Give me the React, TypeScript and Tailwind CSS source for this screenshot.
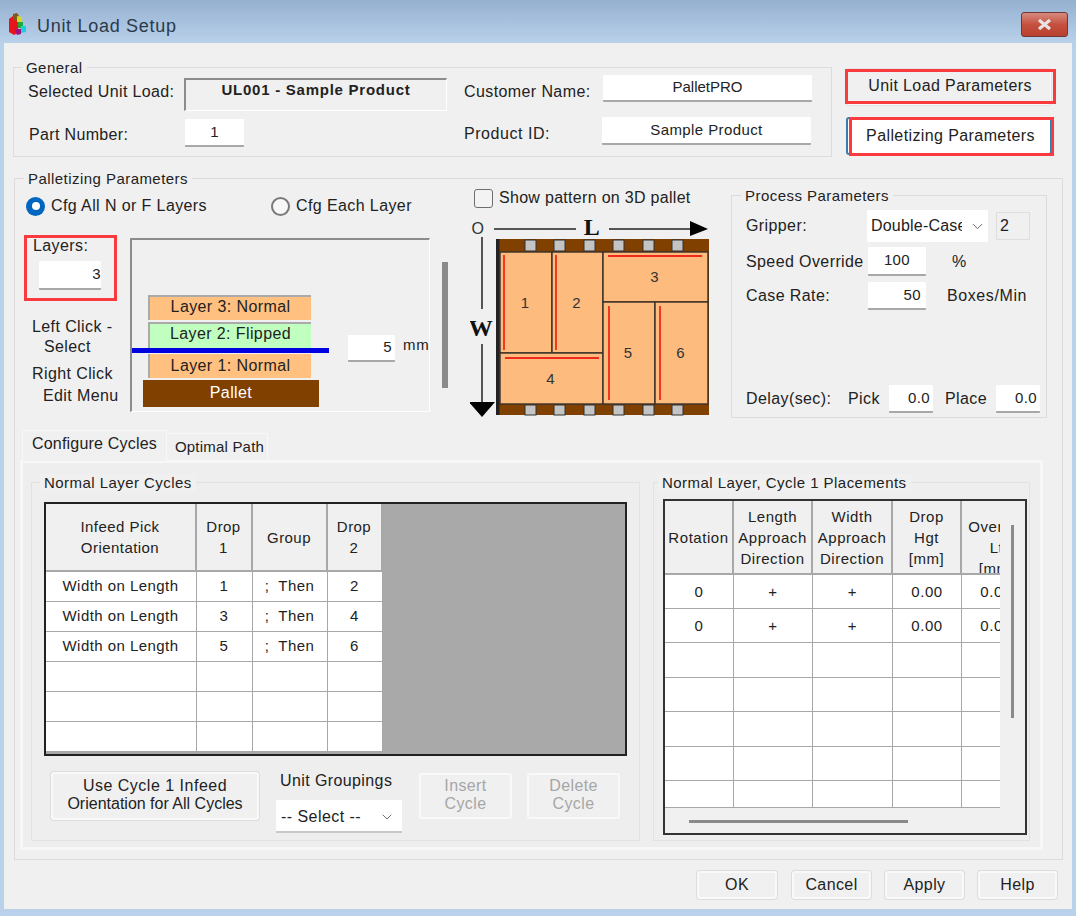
import { ReactNode } from 'react'
import { ChevronDown } from 'lucide-react'

function Group({ title, className, labelClass = 'ml-[9px]', children }: { title: string; className: string; labelClass?: string; children?: ReactNode }) {
  return (
    <div className={`border border-[#dcdcdc] ${className}`}>
      <div className={`-mt-[9px] h-[18px] w-fit bg-[#f0f0f0] px-[4px] text-[15px] leading-[18px] tracking-[0.45px] ${labelClass}`}>{title}</div>
      {children}
    </div>
  )
}

function Field({ className, children }: { className: string; children?: ReactNode }) {
  return (
    <div className={`flex shrink-0 items-center rounded-[1px] border-b-2 border-[#a8a8a8] bg-white text-[15px] ${className}`}>
      {children}
    </div>
  )
}

function Radio({ on }: { on?: boolean }) {
  if (on) {
    return (
      <span className="flex h-[19px] w-[19px] items-center justify-center rounded-full bg-[#0067c0]">
        <span className="h-[8px] w-[8px] rounded-full bg-white" />
      </span>
    )
  }
  return <span className="h-[19px] w-[19px] rounded-full border-2 border-[#7a7a7a] bg-[#f7f7f7]" />
}

function PalletDiagram() {
  const notches = [525, 554, 584, 613, 643, 672]
  const boxes = [
    { n: 1, x: 500, y: 252, w: 52, h: 101 },
    { n: 2, x: 552, y: 252, w: 51, h: 101 },
    { n: 3, x: 603, y: 252, w: 105, h: 50 },
    { n: 4, x: 500, y: 353, w: 103, h: 51 },
    { n: 5, x: 603, y: 302, w: 52, h: 102 },
    { n: 6, x: 655, y: 302, w: 53, h: 102 },
  ]
  const marks = [
    [504, 255, 504, 350],
    [556, 255, 556, 350],
    [608, 256, 702, 256],
    [505, 358, 599, 358],
    [609, 306, 609, 400],
    [660, 306, 660, 400],
  ]
  return (
    <svg width="245" height="203" viewBox="470 215 245 203" className="mt-[7px] block">
      <text x="478" y="234" textAnchor="middle" fontSize="16" fill="#333">O</text>
      <line x1="494" y1="229" x2="576" y2="229" stroke="#555" strokeWidth="2" />
      <text x="592" y="235" textAnchor="middle" fontSize="24" fontWeight="700" fill="#111" fontFamily="'Liberation Serif',serif">L</text>
      <line x1="609" y1="229" x2="692" y2="229" stroke="#555" strokeWidth="2" />
      <polygon points="690,221 708,229 690,236" fill="#000" />
      <line x1="482" y1="237" x2="482" y2="309" stroke="#555" strokeWidth="2" />
      <text x="481" y="336" textAnchor="middle" fontSize="24" fontWeight="700" fill="#111" fontFamily="'Liberation Serif',serif">W</text>
      <line x1="482" y1="344" x2="482" y2="404" stroke="#555" strokeWidth="2" />
      <polygon points="469,402 495,402 482,417" fill="#000" />
      <rect x="496" y="239" width="213" height="176" fill="#804000" />
      {notches.map((x) => (
        <g key={x}>
          <rect x={x} y="240" width="11" height="11" fill="#c4c4c4" stroke="#333" />
          <rect x={x} y="405" width="11" height="10" fill="#c4c4c4" stroke="#333" />
        </g>
      ))}
      <rect x="496" y="239" width="3.5" height="176" fill="#222" />
      {boxes.map((b) => (
        <g key={b.n}>
          <rect x={b.x} y={b.y} width={b.w} height={b.h} fill="#fdbb7e" stroke="#3a3028" strokeWidth="1.4" />
          <text x={b.x + b.w / 2 - 1} y={b.y + b.h / 2 + 5} textAnchor="middle" fontSize="15" fill="#333">{b.n}</text>
        </g>
      ))}
      {marks.map((m) => (
        <line key={m[0] + '-' + m[1]} x1={m[0]} y1={m[1]} x2={m[2]} y2={m[3]} stroke="#f02a1a" strokeWidth="1.8" />
      ))}
    </svg>
  )
}

const cycleRows = [
  ['Width on Length', '1', ';  Then', '2'],
  ['Width on Length', '3', ';  Then', '4'],
  ['Width on Length', '5', ';  Then', '6'],
  ['', '', '', ''],
  ['', '', '', ''],
  ['', '', '', ''],
]

function CyclesTable() {
  return (
    <div className="ml-[12px] mt-[10px] h-[254px] w-[583px] border-2 border-[#222] bg-[#a9a9a9]">
      <div className="grid w-fit grid-cols-[151px_56px_75px_55px] grid-rows-[68px_repeat(6,30px)] text-center text-[15px] leading-[21px] tracking-[0.45px]">
        {['Infeed Pick\nOrientation', 'Drop\n1', 'Group', 'Drop\n2'].map((h) => (
          <div key={h} className="flex items-center justify-center whitespace-pre-line border-b-2 border-r-2 border-[#a8a8a8] bg-[#f0f0f0] pr-[1px]">
            {h}
          </div>
        ))}
        {cycleRows.flatMap((row, r) =>
          row.map((c, i) => (
            <div key={r + '-' + i} className="flex items-center justify-center whitespace-pre border-b border-r border-[#a8a8a8] bg-white pb-[2px] pr-[1px]">
              {c}
            </div>
          )),
        )}
      </div>
    </div>
  )
}

const placementRows = [
  ['0', '+', '+', '0.00', '0.00'],
  ['0', '+', '+', '0.00', '0.00'],
  ['', '', '', '', ''],
  ['', '', '', '', ''],
  ['', '', '', '', ''],
  ['', '', '', '', ''],
  ['', '', '', '', ''],
]

function PlacementsTable() {
  return (
    <div className="relative ml-[9px] mt-[7px] h-[336px] w-[364px] border-2 border-[#333] bg-[#f0f0f0]">
      <div className="h-[308px] w-[335px] overflow-hidden">
        <div className="grid w-[366px] grid-cols-[69px_79px_80px_69px_69px] grid-rows-[74px_34px_34px_35px_34px_35px_34px_27px] text-center text-[15px] leading-[21px] tracking-[0.55px]">
          {['Rotation', 'Length\nApproach\nDirection', 'Width\nApproach\nDirection', 'Drop\nHgt\n[mm]'].map((h) => (
            <div key={h} className="flex items-center justify-center whitespace-pre-line border-b-2 border-r-2 border-[#a8a8a8] bg-[#f0f0f0]">
              {h}
            </div>
          ))}
          <div className="overflow-hidden whitespace-pre-line border-b-2 border-[#a8a8a8] bg-[#f0f0f0] pt-[15px]">{'Overlap\nLt\n[mm]'}</div>
          {placementRows.flatMap((row, r) =>
            row.map((c, i) => (
              <div key={r + '-' + i} className="flex items-center justify-center border-b border-r border-[#a8a8a8] bg-white">
                {c}
              </div>
            )),
          )}
        </div>
      </div>
      <div className="absolute left-[346px] top-[24px] h-[193px] w-[3px] bg-[#8a8a8a]" />
      <div className="absolute left-[24px] top-[319px] h-[3px] w-[219px] bg-[#8a8a8a]" />
    </div>
  )
}

function DialogButton({ className, children }: { className: string; children: ReactNode }) {
  return (
    <div className={`flex shrink-0 items-center justify-center rounded-[3px] border-2 border-[#f9f9f9] bg-[#f0f0f0] text-center leading-[18px] ${className}`}>
      {children}
    </div>
  )
}

export default function App() {
  return (
    <div className="flex h-[916px] w-[1076px] flex-col overflow-hidden bg-[#b9d1ea] font-['Liberation_Sans',sans-serif] text-[16px] tracking-[0.4px] text-[#222]">
      <div className="flex h-[43px] shrink-0 bg-gradient-to-b from-[#95b0d0] to-[#b9d1ea]">
        <svg width="18" height="23" viewBox="0 0 18 23" className="ml-[9px] mt-[13px]">
          <path d="M0 6 L4 3 L9 3 L9 20 L5 22 L0 19 Z" fill="#e8141c" />
          <path d="M4 1 L8 0 L10 3 L9 8 L4 7 Z" fill="#7a5a20" />
          <path d="M8 3 L13 4 L13 9 L8 9 Z" fill="#d8d820" />
          <path d="M9 9 L14 9 L14 15 L9 15 Z" fill="#1fa83c" />
          <path d="M12 13 L17 13 L17 19 L12 20 Z" fill="#18d0d8" />
          <path d="M6 16 L12 16 L12 21 L8 22 Z" fill="#a01080" />
        </svg>
        <div className="ml-[10px] mt-[15px] h-[22px] text-[18px] leading-[22px] tracking-[0.7px] text-[#2b3a4a]">Unit Load Setup</div>
        <div className="ml-auto mr-[8px] mt-[12px] flex h-[25px] w-[47px] items-center justify-center rounded-[3px] border border-[#70373a] bg-gradient-to-b from-[#d68a7e] via-[#c5503f] to-[#b9402e]">
          <svg width="17" height="13" viewBox="0 0 17 13">
            <path d="M3 2 L14 11 M14 2 L3 11" stroke="#e8e2e2" strokeWidth="3.2" />
          </svg>
        </div>
      </div>

      <div className="mx-[4px] flex h-[866px] shrink-0 flex-col bg-[#f0f0f0]">
        <div className="ml-[9px] mt-[24px] flex h-[90px]">
          <Group title="General" labelClass="ml-[8px]" className="h-[90px] w-[819px] shrink-0">
            <div className="-mt-[2px] flex h-[36px] items-start">
              <div className="ml-[14px] mt-[5px] w-[156px] shrink-0 tracking-[0.35px]">Selected Unit Load:</div>
              <div className="mt-[3px] h-[33px] w-[263px] shrink-0 border-b border-l-2 border-r border-t-2 border-[#8c8c8c] border-b-white border-r-white text-center text-[15px] font-bold leading-[20px] tracking-[0.75px]">
                UL001 - Sample Product
              </div>
              <div className="ml-[17px] mt-[5px] w-[139px] shrink-0">Customer Name:</div>
              <Field className="h-[27px] w-[209px] justify-center tracking-[0px]">PalletPRO</Field>
            </div>
            <div className="mt-[6px] flex items-start">
              <div className="ml-[15px] mt-[6px] w-[156px] shrink-0 tracking-[0.35px]">Part Number:</div>
              <Field className="mt-[2px] h-[28px] w-[59px] justify-center">1</Field>
              <div className="ml-[220px] mt-[5px] w-[138px] shrink-0 tracking-[0.55px]">Product ID:</div>
              <Field className="h-[28px] w-[209px] justify-center">Sample Product</Field>
            </div>
          </Group>
          <div className="ml-[14px] mt-[1px] w-[206px] shrink-0">
            <div className="relative flex h-[38px] items-center justify-center rounded-[3px] border border-[#e2e2e2] pb-[2px] pl-[2px] shadow-[inset_0_0_0_1px_#fafafa]">
              Unit Load Parameters
              <div className="absolute -left-[2px] -right-[5px] top-0 bottom-[1px] border-[3px] border-[#f93a3e]" />
            </div>
            <div className="relative mt-[11px] flex h-[38px] items-center justify-center rounded-[3px] border-2 border-[#3a7cb0] bg-white pl-[3px]">
              Palletizing Parameters
              <div className="absolute left-[1px] -right-[4px] -top-[2px] -bottom-[3px] border-[3px] border-[#f93a3e]" />
            </div>
          </div>
        </div>

        <Group title="Palletizing Parameters" className="ml-[10px] mt-[21px] h-[682px] w-[1049px] shrink-0">
          <div className="flex h-[242px]">
            <div className="w-[455px] shrink-0">
              <div className="ml-[11px] mt-[8px] flex h-[20px] items-center">
                <Radio on />
                <span className="ml-[6px] w-[220px]">Cfg All N or F Layers</span>
                <Radio />
                <span className="ml-[6px]">Cfg Each Layer</span>
              </div>
              <div className="ml-[9px] mt-[19px] flex items-start">
                <div className="w-[106px] shrink-0">
                  <div className="h-[66px] w-[93px] border-[3px] border-[#f93a3e] pl-[6px]">
                    <div className="mt-[-1px] h-[18px] leading-[18px]">Layers:</div>
                    <Field className="ml-[6px] mt-[6px] h-[29px] w-[62px] justify-end">3</Field>
                  </div>
                  <div className="ml-[8px] mt-[16px] h-[20px] leading-[20px]">Left Click -</div>
                  <div className="ml-[20px] h-[20px] leading-[20px]">Select</div>
                  <div className="ml-[8px] mt-[7px] h-[20px] leading-[20px]">Right Click</div>
                  <div className="ml-[19px] mt-[2px] h-[20px] leading-[20px]">Edit Menu</div>
                </div>
                <div className="relative mt-[3px] flex h-[174px] w-[300px] shrink-0 border-b border-l-2 border-r border-t-2 border-[#8c8c8c] border-b-white border-r-white">
                  <div className="w-[187px] shrink-0 pt-[55px] text-center leading-[20px]">
                    <div className="ml-[16px] h-[25px] w-[163px] border-l-2 border-t-2 border-[#aaa] bg-[#ffc080]">Layer 3: Normal</div>
                    <div className="ml-[16px] mt-[2px] h-[27px] w-[163px] border-l-2 border-t-2 border-[#aaa] bg-[#c0ffc0]">Layer 2: Flipped</div>
                    <div className="ml-[16px] mt-[5px] h-[24px] w-[163px] border-l-2 border-[#aaa] bg-[#ffc080] leading-[24px]">Layer 1: Normal</div>
                    <div className="ml-[11px] mt-[2px] h-[27px] w-[176px] bg-[#804000] leading-[25px] text-white">Pallet</div>
                  </div>
                  <Field className="ml-[29px] mt-[95px] h-[27px] w-[47px] justify-end pr-[3px]">5</Field>
                  <div className="ml-[8px] mt-[94px] text-[15px] tracking-[0.8px]">mm</div>
                  <div className="absolute left-0 top-[108px] h-[5px] w-[197px] bg-[#0000e0]" />
                </div>
                <div className="ml-[12px] mt-[27px] h-[126px] w-[6px] shrink-0 bg-[#8a8a8a]" />
              </div>
            </div>

            <div className="w-[245px] shrink-0">
              <div className="flex h-[20px] items-center pl-[4px]">
                <span className="h-[19px] w-[19px] rounded-[3px] border border-[#6e6e6e] bg-[#f3f3f3]" />
                <span className="ml-[6px] whitespace-nowrap tracking-[0.3px]">Show pattern on 3D pallet</span>
              </div>
              <PalletDiagram />
            </div>

            <Group title="Process Parameters" className="ml-[16px] mt-[7px] h-[223px] w-[316px] shrink-0">
              <div className="ml-[14px] mt-[5px] flex h-[32px] items-center">
                <span className="w-[121px] shrink-0">Gripper:</span>
                <div className="flex h-[32px] w-[121px] shrink-0 items-center rounded-[1px] bg-white pl-[4px]">
                  <span className="w-[91px] overflow-hidden whitespace-nowrap tracking-[0.2px]">Double-Case</span>
                  <ChevronDown size={17} strokeWidth={1.25} className="ml-[7px] text-[#555]" />
                </div>
                <div className="ml-[8px] h-[28px] w-[34px] border border-[#dedede] pl-[3px] leading-[26px]">2</div>
              </div>
              <div className="ml-[14px] mt-[5px] flex h-[29px] items-center">
                <span className="w-[122px] shrink-0 whitespace-nowrap">Speed Override</span>
                <Field className="h-[29px] w-[58px] justify-center">100</Field>
                <span className="ml-[26px]">%</span>
              </div>
              <div className="ml-[14px] mt-[6px] flex h-[28px] items-center">
                <span className="w-[122px] shrink-0">Case Rate:</span>
                <Field className="h-[28px] w-[58px] justify-end pr-[5px]">50</Field>
                <span className="ml-[21px] tracking-[0.6px]">Boxes/Min</span>
              </div>
              <div className="ml-[14px] mt-[75px] flex h-[28px] items-center">
                <span className="w-[102px] shrink-0">Delay(sec):</span>
                <span className="w-[41px] shrink-0">Pick</span>
                <Field className="h-[28px] w-[44px] justify-end pr-[3px]">0.0</Field>
                <span className="ml-[12px] w-[51px] shrink-0">Place</span>
                <Field className="h-[28px] w-[44px] justify-end pr-[3px]">0.0</Field>
              </div>
            </Group>
          </div>

          <div className="ml-[7px] flex h-[30px] items-start">
            <div className="relative z-10 h-[31px] w-[145px] rounded-t-[2px] border-l border-r border-t border-[#f8f8f8] bg-[#f0f0f0] text-center leading-[26px] tracking-[0.2px]">Configure Cycles</div>
            <div className="ml-[1px] mt-[3px] h-[27px] w-[100px] border-r border-t border-[#f8f8f8] pl-[4px] text-center text-[15px] leading-[25px] tracking-[0.2px]">Optimal Path</div>
          </div>
          <div className="ml-[5px] h-[390px] w-[1023px] border-[3px] border-[#f7f7f7] bg-[#eeeeee]">
            <div className="flex pl-[8px] pt-[19px]">
              <Group title="Normal Layer Cycles" labelClass="ml-[8px] bg-[#eeeeee]" className="h-[359px] w-[609px] shrink-0 border-[#e2e2e2]">
                <CyclesTable />
                <div className="mt-[16px] flex items-start">
                  <DialogButton className="ml-[19px] h-[48px] w-[208px] pb-[3px] shadow-[0_0_0_1px_#dcdcdc]">
                    <span>
                      <span className="tracking-[0.5px]">Use Cycle 1 Infeed</span>
                      <br />
                      <span className="tracking-[0px]">Orientation for All Cycles</span>
                    </span>
                  </DialogButton>
                  <div className="ml-[17px] w-[126px] shrink-0">
                    <div className="h-[20px] whitespace-nowrap pl-[4px] leading-[18px]">Unit Groupings</div>
                    <div className="mt-[8px] flex h-[33px] items-center justify-between border-b-2 border-[#c8c8c8] bg-white pl-[5px] pr-[7px] pt-[3px] tracking-[0.45px]">
                      -- Select --
                      <ChevronDown size={16} strokeWidth={1.25} className="text-[#555]" />
                    </div>
                  </div>
                  <DialogButton className="ml-[17px] mt-[1px] h-[46px] w-[93px] pb-[3px] text-[#a6a6a6]">Insert<br />Cycle</DialogButton>
                  <DialogButton className="ml-[15px] mt-[1px] h-[46px] w-[93px] pb-[3px] text-[#a6a6a6]">Delete<br />Cycle</DialogButton>
                </div>
              </Group>
              <Group title="Normal Layer, Cycle 1 Placements" labelClass="ml-[4px] bg-[#eeeeee]" className="ml-[13px] h-[359px] w-[377px] shrink-0 border-[#e2e2e2]">
                <PlacementsTable />
              </Group>
            </div>
          </div>
        </Group>

        <div className="mt-[11px] flex justify-end pr-[15px]">
          <DialogButton className="h-[28px] w-[80px] shadow-[0_0_0_1px_#dcdcdc]">OK</DialogButton>
          <DialogButton className="ml-[15px] h-[28px] w-[79px] shadow-[0_0_0_1px_#dcdcdc]">Cancel</DialogButton>
          <DialogButton className="ml-[14px] h-[28px] w-[79px] shadow-[0_0_0_1px_#dcdcdc]">Apply</DialogButton>
          <DialogButton className="ml-[14px] h-[28px] w-[79px] shadow-[0_0_0_1px_#dcdcdc]">Help</DialogButton>
        </div>
      </div>
    </div>
  )
}
